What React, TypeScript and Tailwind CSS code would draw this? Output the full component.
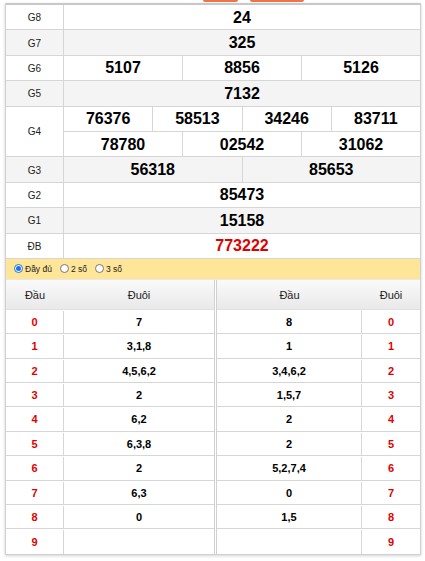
import React from "react";

const left = ["7", "3,1,8", "4,5,6,2", "2", "6,2", "6,3,8", "2", "6,3", "0", ""];
const right = ["8", "1", "3,4,6,2", "1,5,7", "2", "2", "5,2,7,4", "0", "1,5", ""];

function Num({ v, red = false, last = false }: { v: string; red?: boolean; last?: boolean }) {
  return (
    <div
      className={
        "flex-1 flex items-center justify-center pt-[1px] text-[16px] font-bold " +
        (red ? "text-[#e00000] " : "text-black ") +
        (last ? "" : "border-r border-[#d6d6d6]")
      }
    >
      {v}
    </div>
  );
}

function Row({ label, nums, gray = false, red = false }: { label: string; nums: string[]; gray?: boolean; red?: boolean }) {
  return (
    <div className={"flex h-[25.4px] border-b border-[#d6d6d6] " + (gray ? "bg-[#f4f4f4]" : "bg-white")}>
      <div className="w-[58px] shrink-0 border-r border-[#d6d6d6] flex items-center justify-center pt-[1px] text-[10px] text-[#222]">
        {label}
      </div>
      <div className="flex-1 flex">
        {nums.map((n, i) => (
          <Num key={i} v={n} red={red} last={i === nums.length - 1} />
        ))}
      </div>
    </div>
  );
}

function Radio({ on, label }: { on?: boolean; label: string }) {
  return (
    <div className="flex items-center gap-[2px]">
      <span
        className={
          "w-[9px] h-[9px] rounded-full border flex items-center justify-center bg-white " +
          (on ? "border-[#1a73e8]" : "border-[#777]")
        }
      >
        {on && <span className="w-[5px] h-[5px] rounded-full bg-[#1a73e8]" />}
      </span>
      <span className="text-[8.5px] text-[#222]">{label}</span>
    </div>
  );
}

export default function App() {
  return (
    <div className="w-[425px] h-[561px] bg-white overflow-hidden" style={{ fontFamily: '"Liberation Sans", Arial, sans-serif' }}>
      <div className="flex h-[3px]">
        <div className="ml-[203px] w-[35px] h-[2px] rounded-b-[6px] bg-[#f07448]" />
        <div className="ml-[12px] w-[54px] h-[2px] rounded-b-[6px] bg-[#f07448]" />
      </div>
      <div className="ml-[5px] w-[416px] border border-t-2 border-[#d0d0d0] border-t-[#c8c8c8] shadow-[0_1px_3px_rgba(0,0,0,0.18)]">
        <Row label="G8" nums={["24"]} />
        <Row label="G7" nums={["325"]} gray />
        <Row label="G6" nums={["5107", "8856", "5126"]} />
        <Row label="G5" nums={["7132"]} gray />
        <div className="flex border-b border-[#d6d6d6] bg-white">
          <div className="w-[58px] shrink-0 border-r border-[#d6d6d6] flex items-center justify-center pt-[1px] text-[10px] text-[#222]">
            G4
          </div>
          <div className="flex-1 flex flex-col">
            <div className="flex h-[25.4px] border-b border-[#d6d6d6]">
              <Num v="76376" />
              <Num v="58513" />
              <Num v="34246" />
              <Num v="83711" last />
            </div>
            <div className="flex h-[24.4px]">
              <Num v="78780" />
              <Num v="02542" />
              <Num v="31062" last />
            </div>
          </div>
        </div>
        <Row label="G3" nums={["56318", "85653"]} gray />
        <Row label="G2" nums={["85473"]} />
        <Row label="G1" nums={["15158"]} gray />
        <Row label="ĐB" nums={["773222"]} red />
        <div className="h-[21px] bg-[#ffe597] flex items-center gap-[8px] pl-[8px] border-b border-[#e8e8e8]">
          <Radio on label="Đầy đủ" />
          <Radio label="2 số" />
          <Radio label="3 số" />
        </div>
        <div className="flex">
          <div className="w-[209px] border-r border-[#d0d0d0]">
            <div className="flex h-[30px] pt-[2px] bg-linear-to-b from-[#fafafa] to-[#e9e9e9] border-b border-[#e0e0e0] text-[11px] text-[#222]">
              <div className="w-[58px] flex items-center justify-center">Đầu</div>
              <div className="flex-1 flex items-center justify-center">Đuôi</div>
            </div>
            {left.map((v, i) => (
              <div key={i} className={"flex h-[24.4px] pt-[1px] " + (i < 9 ? "border-b border-[#d6d6d6]" : "")}>
                <div className="w-[58px] border-r border-[#d6d6d6] flex items-center justify-center text-[11px] font-bold text-[#e00000]">
                  {i}
                </div>
                <div className="flex-1 flex items-center justify-center text-[11px] font-bold text-black">{v}</div>
              </div>
            ))}
          </div>
          <div className="flex-1 border-l border-[#d0d0d0] ml-[1px]">
            <div className="flex h-[30px] pt-[2px] bg-linear-to-b from-[#fafafa] to-[#e9e9e9] border-b border-[#e0e0e0] text-[11px] text-[#222]">
              <div className="flex-1 flex items-center justify-center">Đầu</div>
              <div className="w-[58px] flex items-center justify-center">Đuôi</div>
            </div>
            {right.map((v, i) => (
              <div key={i} className={"flex h-[24.4px] pt-[1px] " + (i < 9 ? "border-b border-[#d6d6d6]" : "")}>
                <div className="flex-1 border-r border-[#d6d6d6] flex items-center justify-center text-[11px] font-bold text-black">
                  {v}
                </div>
                <div className="w-[58px] flex items-center justify-center text-[11px] font-bold text-[#e00000]">{i}</div>
              </div>
            ))}
          </div>
        </div>
      </div>
    </div>
  );
}
